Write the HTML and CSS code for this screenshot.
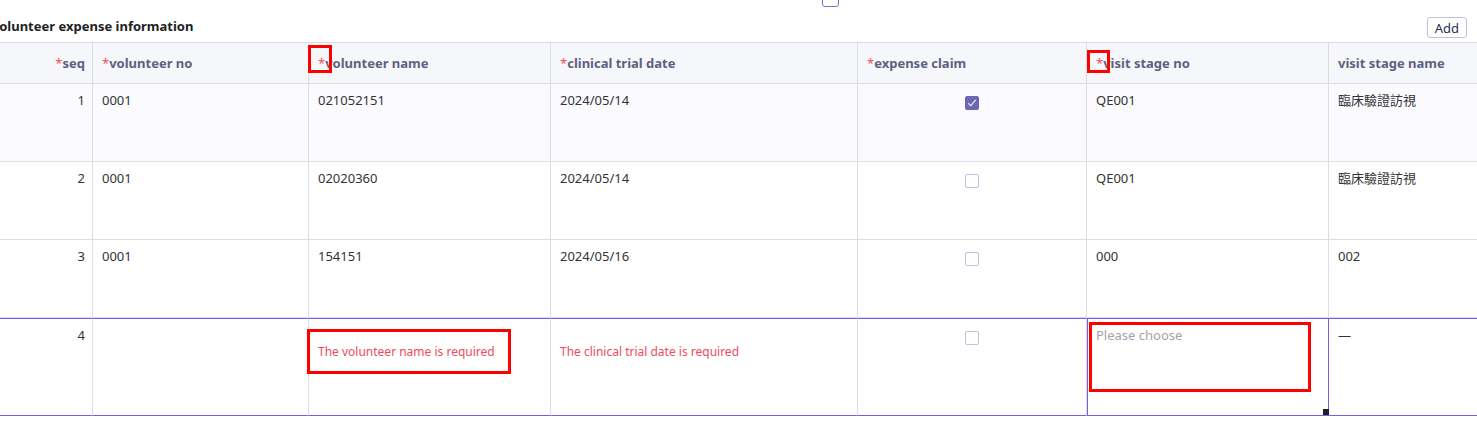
FILE: index.html
```html
<!DOCTYPE html>
<html lang="en">
<head>
<meta charset="UTF-8" />
<title>Volunteer expense information</title>
<link rel="stylesheet" href="styles.css">
</head>
<body>
  <div class="page">
    <div class="top-bar"><span class="top-check"></span></div>

    <div class="section-head">
      <h2 class="section-title">Volunteer expense information</h2>
      <button class="btn-add">Add</button>
    </div>

    <div class="grid-wrap">
      <table class="grid">
        <colgroup>
          <col class="c-seq"><col class="c-no"><col class="c-name"><col class="c-date">
          <col class="c-claim"><col class="c-stage"><col class="c-stage-name">
        </colgroup>
        <thead>
          <tr>
            <th class="num"><i>*</i>seq</th>
            <th><i>*</i>volunteer no</th>
            <th><i>*</i>volunteer name</th>
            <th><i>*</i>clinical trial date</th>
            <th><i>*</i>expense claim</th>
            <th><i>*</i>visit stage no</th>
            <th>visit stage name</th>
          </tr>
        </thead>
        <tbody>
          <tr class="striped">
            <td class="num">1</td>
            <td>0001</td>
            <td>021052151</td>
            <td>2024/05/14</td>
            <td class="center"><span class="check on"></span></td>
            <td>QE001</td>
            <td>臨床驗證訪視</td>
          </tr>
          <tr>
            <td class="num">2</td>
            <td>0001</td>
            <td>02020360</td>
            <td>2024/05/14</td>
            <td class="center"><span class="check"></span></td>
            <td>QE001</td>
            <td>臨床驗證訪視</td>
          </tr>
          <tr>
            <td class="num">3</td>
            <td>0001</td>
            <td>154151</td>
            <td>2024/05/16</td>
            <td class="center"><span class="check"></span></td>
            <td>000</td>
            <td>002</td>
          </tr>
          <tr class="active">
            <td class="num">4</td>
            <td></td>
            <td><div class="error">The volunteer name is required</div></td>
            <td><div class="error">The clinical trial date is required</div></td>
            <td class="center"><span class="check"></span></td>
            <td class="selected"><span class="placeholder">Please choose</span><span class="handle"></span></td>
            <td>—</td>
          </tr>
        </tbody>
      </table>
    </div>

    <!-- annotation marks -->
    <span class="mark m1"></span>
    <span class="mark m2"></span>
    <span class="mark m3"></span>
    <span class="mark m4"></span>
  </div>
</body>
</html>
```

FILE: styles.css
```css
body {
  margin: 0;
  font-family: "Noto Sans", "Noto Sans CJK TC", sans-serif;
  font-size: 13px;
  color: #333;
  background: #fff;
  overflow: hidden;
}

.page {
  position: relative;
  width: 1477px;
  height: 428px;
  overflow: hidden;
}

.top-bar {
  display: flex;
  height: 8px;
  padding-left: 822px;
}
.top-check {
  display: block;
  width: 15px;
  height: 15px;
  margin-top: -10px;
  border: 1px solid #7a76bd;
  border-radius: 3px;
}

.section-head {
  display: flex;
  justify-content: space-between;
  align-items: flex-end;
  height: 34px;
  padding-right: 10px;
}
.section-title {
  margin: 0 0 7px -9px;
  font-size: 13px;
  font-weight: 700;
  color: #222;
}
.btn-add {
  margin-bottom: 4px;
  height: 21px;
  padding: 0 7px;
  font-family: inherit;
  font-size: 13px;
  color: #2b2d50;
  background: #fff;
  border: 1px solid #c3c1e3;
  border-radius: 3px;
}

.grid-wrap {
  margin-left: -20px;
}
.grid {
  table-layout: fixed;
  border-collapse: separate;
  border-spacing: 0;
  width: 1548px;
  border-top: 1px solid #dcdde3;
}
.c-seq { width: 113px; }
.c-no { width: 216px; }
.c-name { width: 242px; }
.c-date { width: 307px; }
.c-claim { width: 229px; }
.c-stage { width: 242px; }
.c-stage-name { width: 199px; }

.grid th,
.grid td {
  border-right: 1px solid #dcdde3;
  border-bottom: 1px solid #dcdde3;
  text-align: left;
  padding: 0 9px;
}
.grid th {
  height: 40px;
  background: #f6f7fb;
  color: #5e6080;
  font-weight: 700;
  font-size: 13px;
}
.grid th i {
  font-style: normal;
  font-weight: 400;
  color: #f0505a;
}
.grid td {
  vertical-align: top;
  padding-top: 7px;
  padding-bottom: 0;
  box-sizing: border-box;
  line-height: 18px;
}
.grid tbody tr td { height: 78px; }
.grid .num {
  text-align: right;
  padding-right: 7px;
}
.grid .center { text-align: center; }

.striped td { background: #fafaff; }

.check {
  display: inline-block;
  width: 12px;
  height: 12px;
  margin-top: 5px;
  border: 1px solid #c0c3dd;
  border-radius: 2px;
  background: #fff;
  vertical-align: top;
  position: relative;
}
.check.on {
  background: #6c66b3;
  border-color: #6c66b3;
}
.check.on::after {
  content: "";
  position: absolute;
  left: 4px;
  top: 1px;
  width: 3px;
  height: 7px;
  border: solid #fff;
  border-width: 0 1.5px 1.5px 0;
  transform: rotate(40deg);
}

.active td {
  border-top: 1px solid #6e62f0;
  border-bottom: 1px solid #6e62f0;
}
.grid tbody tr.active td { height: 98px; }
.active td.selected {
  position: relative;
  border-right-color: #6e62f0;
  box-shadow: inset 1px 0 0 #6e62f0;
}
.error {
  margin-top: 17px;
  font-size: 12px;
  color: #ef4a5f;
}
.placeholder { color: #a3a3ab; }
.handle {
  position: absolute;
  right: -1px;
  bottom: 0;
  width: 6px;
  height: 6px;
  background: #222;
}

.mark {
  position: absolute;
  border: 3px solid #ff0000;
  box-sizing: border-box;
}
.m1 { left: 308px; top: 45px; width: 24px; height: 28px; }
.m2 { left: 1087px; top: 50px; width: 23px; height: 23px; }
.m3 { left: 307px; top: 329px; width: 204px; height: 45px; }
.m4 { left: 1089px; top: 322px; width: 222px; height: 70px; }
```
